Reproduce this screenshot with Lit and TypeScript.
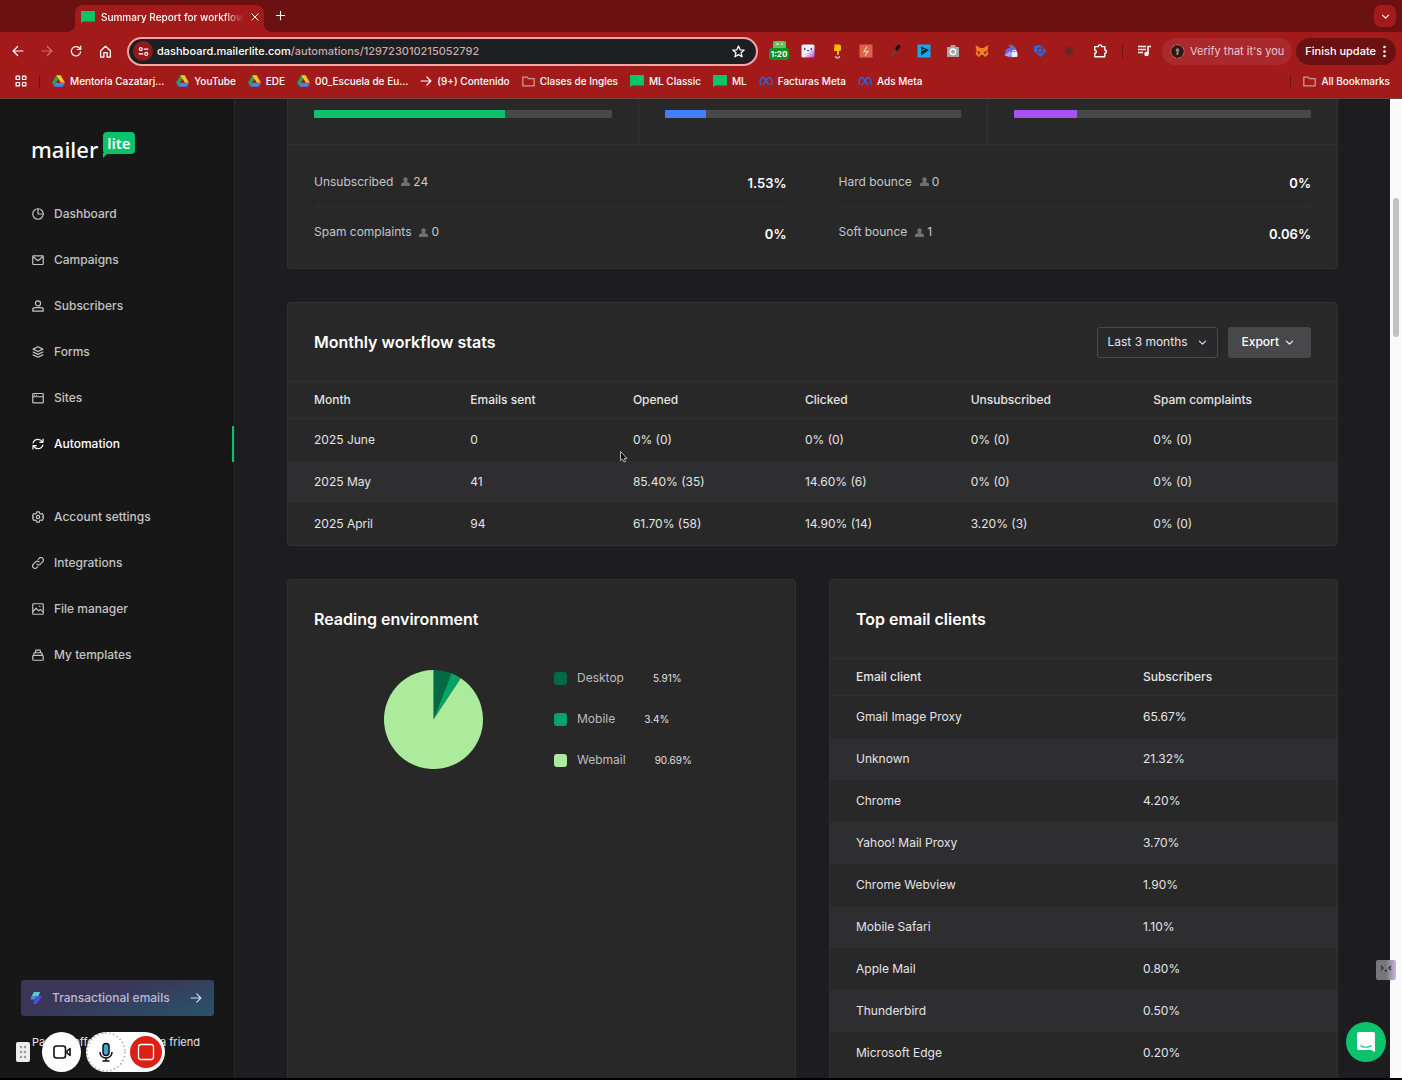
import { LitElement, html, css, svg, nothing } from "lit";
import { customElement } from "lit/decorators.js";
import { classMap } from "lit/directives/class-map.js";

const stroke = (body: unknown, size = 12, cls = "") => html`<svg class="ico ${cls}" width=${size} height=${size} viewBox="0 0 16 16" fill="none" stroke="currentColor" stroke-width="1.6" stroke-linecap="round" stroke-linejoin="round" aria-hidden="true">${body}</svg>`;

const glyph = {
  dashboard: svg`<circle cx="8" cy="8" r="7"/><path d="M8 1v7h7"/>`,
  mail: svg`<rect x="1" y="2.5" width="14" height="11.5" rx="1"/><path d="M2 4l6 5 6-5"/>`,
  person: svg`<circle cx="8" cy="4.5" r="3.4"/><path d="M1 14.8v-1.6c0-2 1.4-3 3-3h8c1.600 0 3 1 3 3v1.600z"/>`,
  layers: svg`<path d="M8 1L1.500 4.200 8 7.400l6.500-3.200z"/><path d="M1.500 8L8 11.200 14.500 8M1.500 11.800L8 15l6.500-3.200"/>`,
  sites: svg`<rect x="1" y="2" width="14" height="12.500" rx="1"/><path d="M1 6.300h14M3.500 4.200h.1M6 4.200h.1"/>`,
  sync: svg`<path d="M1.500 6.500C2.500 3.500 5 1.800 8 1.800c2.500 0 4.300 1.200 5.800 3.400M14.700 1.500v4.300h-4.300M14.500 9.500c-1 3-3.500 4.700-6.500 4.700-2.500 0-4.300-1.200-5.800-3.400M1.300 14.500v-4.300h4.300"/>`,
  gear: svg`<path d="M6.300 1.200h3.400l.6 2 1.400.8 2-.5 1.700 2.900-1.400 1.600 1.400 1.600-1.700 2.900-2-.5-1.400.8-.6 2H6.300l-.6-2-1.400-.8-2 .5L.6 9.600 2 8 .6 6.400l1.700-2.900 2 .5 1.400-.8z"/><circle cx="8" cy="8" r="2.200"/>`,
  link: svg`<path d="M6.600 9.400a3.200 3.200 0 0 0 4.600 0l3-3a3.200 3.200 0 0 0-4.600-4.600L8.300 3.100M9.400 6.600a3.200 3.200 0 0 0-4.600 0l-3 3a3.200 3.200 0 0 0 4.600 4.600l1.300-1.300"/>`,
  image: svg`<rect x="1" y="1" width="14" height="14" rx="1"/><path d="M1.500 11l4-4 3.500 3.500 2-2 3.500 3M10 4.500h.6"/>`,
  stack: svg`<rect x="1" y="8.500" width="14" height="6.500" rx="1.500"/><path d="M2 8.500l1-3.500h10l1 3.500M4.500 5l.6-3.500h5.800l.6 3.500"/>`,
  chevron: svg`<path d="M3.500 6L8 10.500 12.500 6"/>`,
  right: svg`<path d="M1.500 8h13M9 2.500L14.500 8 9 13.500"/>`,
  back: svg`<path d="M14.500 8h-13M7.500 2L1.500 8l6 6"/>`,
  forward: svg`<path d="M1.500 8h13M8.500 2l6 6-6 6"/>`,
  reload: svg`<path d="M13.500 5.500A6.200 6.200 0 1 0 14.200 9M14.300 1.500v4.500H9.800"/>`,
  home: svg`<path d="M2 7l6-5.500L14 7v7.800h-4V9.500H6v5.300H2z"/>`,
  close: svg`<path d="M3 3l10 10M13 3L3 13"/>`,
  plus: svg`<path d="M8 2v12M2 8h12"/>`,
  star: svg`<path d="M8 1.300l2 4.600 5 .4-3.800 3.300 1.200 4.900L8 11.900l-4.400 2.600 1.200-4.900L1 6.300l5-.4z"/>`,
  folder: svg`<path d="M1 13.500v-11h5l2 2h7v9z"/>`,
  grid: svg`<path d="M1.500 1.500h4.500v4.500H1.500zM10 1.500h4.500v4.500H10zM1.500 10h4.500v4.500H1.500zM10 10h4.500v4.500H10z"/>`,
  puzzle: svg`<path d="M2 3h4c0-2.600 4-2.600 4 0h3.500v4c2.400 0 2.400 3.500 0 3.500v4H2v-4c2.400 0 2.400-3.500 0-3.500z"/>`,
};

const drive = html`<svg class="ico" width="13" height="12" viewBox="0 0 18 16" aria-hidden="true"><path d="M6 0h6l-3 5.300L3.200 15.300 0 10.500z" fill="#20a35b"/><path d="M6 0h6l6 10.500h-6z" fill="#fcc21f"/><path d="M5.800 10.500H18L15 16H3z" fill="#4285f4"/><path d="M9 5.300l3 5.200H6z" fill="#a31a1a"/></svg>`;
const flag = html`<svg class="ico" width="14" height="12" viewBox="0 0 14 12" aria-hidden="true"><path d="M0 0h14v10.500H2.500L0 12z" fill="#06c668"/></svg>`;
const meta = html`<svg class="ico" width="14" height="12" viewBox="0 0 18 12" fill="none" stroke="#2f62d9" stroke-width="2" aria-hidden="true"><path d="M2 11C.5 5 3 1.500 5 1.500c3.500 0 5 9.500 8.500 9.500M16 11c1.500-6-1-9.500-3-9.500-3.500 0-5 9.500-8.500 9.500"/></svg>`;
const person = html`<svg class="ico person" width="9" height="9" viewBox="0 0 9 9" fill="currentColor" aria-hidden="true"><circle cx="4.500" cy="2.400" r="2.200"/><path d="M0 9V7.600C0 6 1.300 5.600 3 5.300V4h3v1.300c1.700.3 3 .7 3 2.300V9z"/></svg>`;

const bookmarks: [unknown, string][] = [
  [drive, "Mentoría Cazatarj..."],
  [drive, "YouTube"],
  [drive, "EDE"],
  [drive, "00_Escuela de Eu..."],
  [stroke(glyph.right, 12), "(9+) Contenido"],
  [stroke(glyph.folder, 13, "dim"), "Clases de Ingles"],
  [flag, "ML Classic"],
  [flag, "ML"],
  [meta, "Facturas Meta"],
  [meta, "Ads Meta"],
];

const extensions: [string, unknown][] = [
  ["Timer", svg`<rect x="4" y="0" width="13" height="9" rx="2" fill="#5fc35f"/><path d="M7 3h3M12 3h2" stroke="#fff"/><rect x="0" y="7" width="20" height="12" rx="3" fill="#129321"/><text x="10" y="16" text-anchor="middle" font-size="8" font-weight="700" fill="#fff">1:20</text>`],
  ["Notes", svg`<defs><linearGradient id="nt" x1="0" y1="0" x2="1" y2="1"><stop offset=".5" stop-color="#f3effb"/><stop offset="1" stop-color="#a646d8"/></linearGradient></defs><rect x="3.500" y="3.500" width="13" height="13" rx="1.500" fill="url(#nt)"/><path d="M6 7l1.500 1L6 9M9 9.500h2M14 7l-1.500 1L14 9" stroke="#443b59" fill="none"/>`],
  ["Pointer", svg`<path d="M7.500 3.500h5q1.500 0 1.500 2v3q0 1.500-1.500 1.500H12v3q0 1-1 1t-1-1v-3H7z" fill="#fbb90b"/><path d="M8.500 15c0 2.500 4 2.500 4 0" stroke="#c4a5df" stroke-width="1.500" fill="none"/>`],
  ["Flash", svg`<rect x="3.500" y="3.500" width="13" height="13" fill="#d8644b"/><path d="M11 5.500l-3 5h4l-3 4.500" stroke="#f5c1b2" stroke-width="1.300" fill="none"/>`],
  ["Colour picker", svg`<path d="M5 16l1-3 5-5 2 2-5 5z" fill="#6f3d35"/><path d="M10 7l3-3c2-1 3 1 2 2.500l-3 4z" fill="#16100f"/>`],
  ["Player", svg`<rect x="3.500" y="3.500" width="13" height="13" fill="#12a9ee"/><path d="M7 5.500l8 3.500-8 5.500z" fill="#0b2330"/><path d="M7 9.500l4-1" stroke="#12a9ee" fill="none"/>`],
  ["Screenshot", svg`<path d="M4 6h3l1-2h4l1 2h3v10H4z" fill="#a9a5a5"/><circle cx="10" cy="10.800" r="2.800" fill="none" stroke="#fff" stroke-width="1.300"/>`],
  ["Wallet", svg`<path d="M3.500 4l5 3h3l5-3-1 6 1 3-3 3-2-1h-3l-2 1-3-3 1-3z" fill="#f57b24"/><path d="M5 10l3 1-1 3zM15 10l-3 1 1 3zM8.500 14h3v1.500h-3z" fill="#5c2b25"/>`],
  ["Privacy", svg`<path d="M4 12c0-4 3-5 5-5 0-2-1-3-2-3 4-1 7 1 8 4 1.500 2 1 5 0 7-3 3-9 2-11-3z" fill="#6a65d9"/><path d="M3 14c3-1 5-3 6-4l2 3-3 3z" fill="#a8a4ee"/><rect x="10.500" y="11" width="6" height="5" rx="1" fill="#e8eefb"/><path d="M12 11V9.500h3V11" stroke="#e8eefb" fill="none"/>`],
  ["Tags", svg`<path d="M4 5l6-1 6.500 6-6 6L4 10z" fill="#2f68dc"/><circle cx="10" cy="9.500" r="2.500" fill="none" stroke="#8b2440" stroke-width="1.200"/>`],
  ["Recorder", svg`<circle cx="10" cy="10" r="4.500" fill="#772522"/><circle cx="10" cy="10" r="2" fill="#532829"/>`],
];

const primaryNav: [unknown, string][] = [
  [glyph.dashboard, "Dashboard"], [glyph.mail, "Campaigns"], [glyph.person, "Subscribers"],
  [glyph.layers, "Forms"], [glyph.sites, "Sites"], [glyph.sync, "Automation"],
];
const secondaryNav: [unknown, string][] = [
  [glyph.gear, "Account settings"], [glyph.link, "Integrations"], [glyph.image, "File manager"], [glyph.stack, "My templates"],
];

const rates = [
  { label: "Opened", value: 64, tone: "green" },
  { label: "Clicked", value: 14, tone: "blue" },
  { label: "Click to open", value: 21, tone: "purple" },
];
const totals = [
  ["Unsubscribed", "24", "1.53%"], ["Hard bounce", "0", "0%"],
  ["Spam complaints", "0", "0%"], ["Soft bounce", "1", "0.06%"],
];
const months = [
  ["2025 June", "0", "0% (0)", "0% (0)", "0% (0)", "0% (0)"],
  ["2025 May", "41", "85.40% (35)", "14.60% (6)", "0% (0)", "0% (0)"],
  ["2025 April", "94", "61.70% (58)", "14.90% (14)", "3.20% (3)", "0% (0)"],
];
const clients = [
  ["Gmail Image Proxy", "65.67%"], ["Unknown", "21.32%"], ["Chrome", "4.20%"],
  ["Yahoo! Mail Proxy", "3.70%"], ["Chrome Webview", "1.90%"], ["Mobile Safari", "1.10%"],
  ["Apple Mail", "0.80%"], ["Thunderbird", "0.50%"], ["Microsoft Edge", "0.20%"],
];
const environment = [
  { label: "Desktop", value: 5.91, color: "#036b43" },
  { label: "Mobile", value: 3.4, color: "#05a366" },
  { label: "Webmail", value: 90.69, color: "#aceb9b" },
];

function slices() {
  let from = 0;
  const at = (share: number) => {
    const a = (share / 100) * Math.PI * 2;
    return `${50 + 50 * Math.sin(a)} ${50 - 50 * Math.cos(a)}`;
  };
  return environment.map((e) => {
    const to = from + e.value;
    const d = `M50 50L${at(from)}A50 50 0 ${e.value > 50 ? 1 : 0} 1 ${at(to)}Z`;
    from = to;
    return svg`<path d=${d} fill=${e.color}/>`;
  });
}

@customElement("app-root")
export class AppRoot extends LitElement {
  static styles = css`
    :host { display: flex; flex-direction: column; box-sizing: border-box; height: 100vh; overflow: hidden; position: relative; border-bottom: 2px solid #000; background: #1d1d1f; color: #e4e4e6; font: 400 12px/18px Inter, "Liberation Sans", sans-serif; }
    *, *::before, *::after { box-sizing: border-box; }
    button, select, input { font: inherit; color: inherit; border: 0; background: none; padding: 0; margin: 0; }
    a { color: inherit; text-decoration: none; }
    h2 { margin: 0; font-size: 16px; line-height: 24px; font-weight: 600; color: #fff; }
    .ico { flex: none; display: block; }
    .dim { color: #c79a9a; }

    .tabs { flex: none; height: 32px; display: flex; align-items: flex-end; background: #6b1111; padding: 0 6px 0 75px; color: #fff; font-size: 10px; font-weight: 500; }
    .tab { position: relative; display: flex; align-items: center; gap: 6px; width: 189px; height: 27px; padding: 0 8px 4px 6px; background: #a31a1a; border-radius: 8px 8px 0 0; }
    .tab::before, .tab::after { content: ""; position: absolute; bottom: 0; width: 8px; height: 8px; }
    .tab::before { left: -8px; background: radial-gradient(circle at 0 0, transparent 8px, #a31a1a 8px); }
    .tab::after { right: -8px; background: radial-gradient(circle at 100% 0, transparent 8px, #a31a1a 8px); }
    .tab-title { flex: 1; white-space: nowrap; mask-image: linear-gradient(90deg, #000 86%, transparent 100%); }
    .new-tab { margin: 0 auto 11px 11px; }
    .tab-search { display: grid; place-items: center; width: 22px; height: 22px; margin-bottom: 5px; background: #a31a1a; border-radius: 7px; }

    .toolbar { flex: none; display: flex; align-items: center; height: 38px; padding: 0 6px 0 12px; background: #a31a1a; color: #fff; }
    .nav-buttons { display: flex; gap: 17px; margin-right: 15px; }
    .nav-buttons button:nth-child(2) { color: #d86d68; }
    .omnibox { flex: 1; display: flex; align-items: center; height: 29px; padding: 0 11px 0 4px; border: 2px solid #f2a6a0; border-radius: 15px; background: #1b1f21; font-size: 11px; font-weight: 500; }
    .site { display: grid; place-items: center; width: 20px; height: 20px; margin-right: 4px; border-radius: 50%; background: #8f1a1c; }
    .omnibox input { flex: 1; min-width: 0; color: #cda9ab; outline: none; }
    .extensions { display: flex; gap: 9px; margin: 0 14px 0 11px; }
    .extensions button, .extensions svg { display: block; width: 20px; height: 20px; }
    .puzzle { margin-right: 15px; }
    .rule { width: 1px; height: 13px; background: #6b1111; }
    .media { margin: 0 11px 0 15px; }
    .verify { display: flex; align-items: center; gap: 5px; height: 27px; padding: 0 8px; border-radius: 14px; background: #a9292c; color: #edc8d7; font-size: 11px; white-space: nowrap; }
    .update { display: flex; align-items: center; gap: 7px; height: 27px; margin-left: 4px; padding: 0 10px 0 9px; border-radius: 14px; background: #6b1111; font-size: 11px; font-weight: 500; white-space: nowrap; }

    .bookmarks { flex: none; display: flex; align-items: center; gap: 12px; height: 29px; padding: 0 12px 6px 15px; background: #a31a1a; border-bottom: 1px solid #704444; color: #fff; font-size: 10px; font-weight: 500; white-space: nowrap; }
    .bookmarks a { display: flex; align-items: center; gap: 5px; }
    .bookmarks .all { margin-left: auto; }

    .page { flex: 1; min-height: 0; display: flex; }
    .sidebar { flex: none; display: flex; flex-direction: column; width: 235px; border-right: 1px solid #29292b; background: #171717; }
    .logo { display: flex; align-items: flex-start; gap: 5px; margin: 33px 0 33px 31px; color: #fff; font: 500 22px/28px "Noto Sans", sans-serif; }
    .logo-word { padding-top: 3px; }
    .bubble { position: relative; height: 22px; padding: 0 4px; border-radius: 4px; background: #09c269; font-size: 15px; font-weight: 600; line-height: 22px; }
    .bubble::after { content: ""; position: absolute; left: 0; bottom: -4px; border-left: 5px solid #09c269; border-bottom: 5px solid transparent; }
    .menu { display: flex; flex-direction: column; gap: 10px; margin-bottom: 37px; }
    .menu a { display: flex; align-items: center; gap: 10px; height: 36px; padding-left: 32px; color: #c3c3c5; font-weight: 500; }
    .menu a.current { color: #fff; border-right: 2px solid #09c269; }
    .transactional { display: flex; align-items: center; gap: 10px; height: 36px; margin: auto 20px 17px 21px; padding: 0 12px 0 9px; border-radius: 3px; background: linear-gradient(165deg, #3b3558 35%, #28536a); color: #b9bbd0; font-weight: 500; }
    .transactional .ico:last-child { margin-left: auto; color: #d5d9e5; }
    .referrals { display: flex; justify-content: space-between; padding: 0 34px 27px 32px; font-size: 11px; }

    .main { flex: 1; min-width: 0; display: flex; flex-direction: column; gap: 33px; padding: 0 52px; overflow: hidden; background: #1d1d1f; }
    .card { flex: none; border: 1px solid #313133; border-radius: 4px; background: #282828; }
    .summary { border-top: 0; border-radius: 0 0 4px 4px; }
    .rates { display: grid; grid-template-columns: repeat(3, 1fr); border-bottom: 1px solid #303032; }
    .rate { padding: 11px 26px 26px; }
    .rate + .rate { border-left: 1px solid #323234; }
    .track { height: 8px; border-radius: 1px; background: #48484a; overflow: hidden; }
    .fill { height: 100%; }
    .green { background: #0fc16b; }
    .blue { background: #3d81f4; }
    .purple { background: #a653f5; }
    .totals { display: grid; grid-template-columns: 1fr 1fr; column-gap: 52px; padding: 12px 26px 11px; }
    .total { display: flex; align-items: center; gap: 8px; height: 50px; color: #c6c6c8; }
    .total:nth-child(-n + 2) { border-bottom: 1px solid #303032; }
    .people { display: flex; align-items: center; gap: 3px; }
    .person { color: #707072; }
    .total strong { margin-left: auto; padding-top: 3px; font-size: 13px; font-weight: 600; color: #fff; }

    .card-head { display: flex; align-items: center; gap: 10px; height: 78px; padding: 0 26px; }
    .card-head h2 { margin-right: auto; }
    .period { display: grid; align-items: center; height: 31px; border: 1px solid #4a4a4d; border-radius: 3px; background: #29292b; }
    .period > * { grid-area: 1 / 1; }
    .period select { appearance: none; height: 29px; padding: 0 29px 0 9px; }
    .period .ico { justify-self: end; margin-right: 9px; pointer-events: none; }
    .export { display: flex; align-items: center; gap: 5px; height: 31px; padding: 0 16px 0 13px; border-radius: 3px; background: #48484a; color: #fff; font-weight: 500; }

    table { width: 100%; border-collapse: collapse; table-layout: fixed; }
    th, td { padding: 12px 0 12px 26px; text-align: left; }
    th { padding-top: 9px; padding-bottom: 9px; border-top: 1px solid #303032; border-bottom: 1px solid #303032; font-weight: 500; }
    tbody tr:nth-child(even) { background: #2e2e30; }
    .c1 { width: 14.9%; } .c2 { width: 15.5%; } .c3 { width: 16.4%; } .c4 { width: 15.8%; } .c5 { width: 17.4%; }
    .client { width: 56.6%; }

    .split { flex: none; display: grid; grid-template-columns: 1fr 1fr; gap: 33px; }
    .clients { padding-bottom: 26px; }
    .reading { display: flex; align-items: center; padding: 11px 26px 0 96px; }
    .pie { flex: none; width: 99px; height: 99px; }
    .legend { display: flex; flex-direction: column; gap: 23px; margin: 0 0 0 71px; padding: 0; list-style: none; }
    .legend li { display: flex; align-items: center; gap: 10px; color: #bcbcbe; }
    .swatch { width: 13px; height: 13px; border-radius: 3px; }
    .share { margin-left: 19px; font-size: 10px; color: #e0e0e2; }

    .scrollbar { flex: none; width: 12px; padding: 99px 3px 0; background: #fafafa; }
    .thumb { height: 139px; border-radius: 3px; background: #c1c1c1; }

    .recorder { position: absolute; left: 16px; bottom: 6px; display: flex; align-items: center; }
    .grip { display: grid; place-items: center; width: 14px; height: 20px; margin-right: 12px; border-radius: 2px; background: #eee; }
    .camera { display: grid; place-items: center; width: 39px; height: 40px; margin-right: 5px; border-radius: 50%; background: #fff; color: #111; }
    .pill { display: flex; align-items: center; width: 79px; height: 40px; border-radius: 20px; background: #fff; }
    .pill button, .camera { line-height: 0; }
    .chat { position: absolute; right: 16px; bottom: 16px; display: grid; place-items: center; width: 40px; height: 40px; border-radius: 50%; background: #0cc26c; }
    .helper { position: absolute; right: 6px; bottom: 98px; line-height: 0; }
    .pointer { position: absolute; left: 620px; top: 451px; }
  `;

  private menu(items: [unknown, string][], label: string) {
    return html`<nav class="menu" aria-label=${label}>${items.map(([g, text]) => html`<a href="#" class=${classMap({ current: text === "Automation" })} aria-current=${text === "Automation" ? "page" : nothing}>${stroke(g)}${text}</a>`)}</nav>`;
  }

  private rows(data: string[][]) {
    return html`<tbody>${data.map((r) => html`<tr>${r.map((c) => html`<td>${c}</td>`)}</tr>`)}</tbody>`;
  }

  render() {
    return html`
      <div class="tabs">
        <div class="tab">${flag}<span class="tab-title">Summary Report for workflow</span><button aria-label="Close tab">${stroke(glyph.close, 10)}</button></div>
        <button class="new-tab" aria-label="New tab">${stroke(glyph.plus, 11)}</button>
        <button class="tab-search" aria-label="Search tabs">${stroke(glyph.chevron, 11)}</button>
      </div>
      <div class="toolbar">
        <div class="nav-buttons">
          <button aria-label="Back">${stroke(glyph.back)}</button>
          <button aria-label="Forward">${stroke(glyph.forward)}</button>
          <button aria-label="Reload">${stroke(glyph.reload)}</button>
          <button aria-label="Home">${stroke(glyph.home, 13)}</button>
        </div>
        <div class="omnibox">
          <button class="site" aria-label="Site information">${stroke(svg`<circle cx="4" cy="4.500" r="2.200"/><path d="M9 4.500h5.500M1.500 11.500H7"/><circle cx="12" cy="11.500" r="2.200"/>`, 11)}</button>
          <label for="path">dashboard.mailerlite.com</label><input id="path" value="/automations/129723010215052792">
          <button aria-label="Bookmark this page">${stroke(glyph.star, 13)}</button>
        </div>
        <div class="extensions">${extensions.map(([name, art]) => html`<button aria-label=${name}><svg viewBox="0 0 20 20">${art}</svg></button>`)}</div>
        <button class="puzzle" aria-label="Extensions">${stroke(glyph.puzzle, 14)}</button>
        <span class="rule"></span>
        <button class="media" aria-label="Media controls"><svg class="ico" width="13" height="12" viewBox="0 0 13 12" fill="none" stroke="#fff" stroke-width="1.500"><path d="M0 1.500h8M0 4.500h8M0 7.500h5M10 9V1.500h3"/><circle cx="8.500" cy="9" r="1.500" fill="#fff"/></svg></button>
        <button class="verify"><svg class="ico" width="15" height="15" viewBox="0 0 15 15"><circle cx="7.500" cy="7.500" r="6.700" fill="#241b1c" stroke="#e0605c" stroke-dasharray="5 1"/><circle cx="7.500" cy="6" r="1.800" fill="#a87c6b"/><path d="M6.500 7h2v4h-2z" fill="#a87c6b"/></svg>Verify that it's you</button>
        <button class="update">Finish update<svg class="ico" width="3" height="13" viewBox="0 0 3 13" fill="#fff"><circle cx="1.500" cy="2" r="1.300"/><circle cx="1.500" cy="6.500" r="1.300"/><circle cx="1.500" cy="11" r="1.300"/></svg></button>
      </div>
      <div class="bookmarks">
        <button aria-label="Apps">${stroke(glyph.grid)}</button><span class="rule"></span>
        ${bookmarks.map(([icon, text]) => html`<a href="#">${icon}${text}</a>`)}
        <span class="rule all"></span><a href="#">${stroke(glyph.folder, 13, "dim")}All Bookmarks</a>
      </div>

      <div class="page">
        <aside class="sidebar">
          <a class="logo" href="#"><span class="logo-word">mailer</span><span class="bubble">lite</span></a>
          ${this.menu(primaryNav, "Main")}
          ${this.menu(secondaryNav, "Account")}
          <a class="transactional" href="#"><svg class="ico" width="12" height="12" viewBox="0 0 12 12"><path d="M4 0h6L8.500 4.500h-7z" fill="#5cc8d8"/><path d="M1.500 4.500H11L8.500 7.500H.5z" fill="#3a9ce0"/><path d="M5.500 4.500H12L6.500 12H3l1.500-4.500z" fill="#4b4be0"/></svg>Transactional emails${stroke(glyph.right)}</a>
          <div class="referrals"><a href="#">Partner offers</a><a href="#">Refer a friend</a></div>
        </aside>

        <main class="main">
          <section class="card summary">
            <div class="rates">${rates.map((r) => html`<div class="rate"><div class="track" role="img" aria-label=${r.label}><div class="fill ${r.tone}" style="width:${r.value}%"></div></div></div>`)}</div>
            <div class="totals">${totals.map(([name, count, share]) => html`<div class="total"><span>${name}</span><span class="people">${person}${count}</span><strong>${share}</strong></div>`)}</div>
          </section>

          <section class="card">
            <div class="card-head">
              <h2>Monthly workflow stats</h2>
              <div class="period"><select aria-label="Period"><option>Last 3 months</option></select>${stroke(glyph.chevron, 11)}</div>
              <button class="export">Export${stroke(glyph.chevron, 11)}</button>
            </div>
            <table>
              <thead><tr><th class="c1">Month</th><th class="c2">Emails sent</th><th class="c3">Opened</th><th class="c4">Clicked</th><th class="c5">Unsubscribed</th><th>Spam complaints</th></tr></thead>
              ${this.rows(months)}
            </table>
          </section>

          <div class="split">
            <section class="card">
              <div class="card-head"><h2>Reading environment</h2></div>
              <div class="reading">
                <svg class="pie" viewBox="0 0 100 100" role="img" aria-label="Reading environment">${slices()}</svg>
                <ul class="legend">${environment.map((e) => html`<li><span class="swatch" style="background:${e.color}"></span>${e.label}<span class="share">${e.value}%</span></li>`)}</ul>
              </div>
            </section>
            <section class="card clients">
              <div class="card-head"><h2>Top email clients</h2></div>
              <table>
                <thead><tr><th class="client">Email client</th><th>Subscribers</th></tr></thead>
                ${this.rows(clients)}
              </table>
            </section>
          </div>
        </main>
        <div class="scrollbar"><div class="thumb"></div></div>
      </div>

      <div class="recorder">
        <span class="grip"><svg class="ico" width="8" height="14" viewBox="0 0 8 14" fill="#999"><circle cx="2" cy="2" r="1.200"/><circle cx="6" cy="2" r="1.200"/><circle cx="2" cy="7" r="1.200"/><circle cx="6" cy="7" r="1.200"/><circle cx="2" cy="12" r="1.200"/><circle cx="6" cy="12" r="1.200"/></svg></span>
        <button class="camera" aria-label="Camera"><svg class="ico" width="18" height="14" viewBox="0 0 18 14" fill="none" stroke="currentColor" stroke-width="1.600" stroke-linejoin="round"><rect x="1" y="1" width="11.500" height="12" rx="2.500"/><path d="M14 6l3-2.500v7L14 8z"/></svg></button>
        <div class="pill">
          <button aria-label="Microphone"><svg class="ico" width="40" height="40" viewBox="0 0 40 40" fill="none"><circle cx="20" cy="20" r="19" stroke="#aaa" stroke-width="1.500" stroke-dasharray="1.500 2.500"/><rect x="17" y="11.500" width="6" height="12" rx="3" fill="#4ba0d2" stroke="#111" stroke-width="1.500"/><path d="M14 20c0 8 12 8 12 0M20 26v3M16.500 29h7" stroke="#111" stroke-width="1.600"/></svg></button>
          <button aria-label="Stop recording"><svg class="ico" width="39" height="40" viewBox="0 0 39 40"><circle cx="20" cy="20" r="16" fill="#db2015"/><rect x="12.500" y="12.500" width="15" height="15" rx="2.500" fill="none" stroke="#fff" stroke-width="1.300"/></svg></button>
        </div>
      </div>
      <button class="helper" aria-label="Assistant"><svg class="ico" width="20" height="20" viewBox="0 0 20 20"><defs><linearGradient id="hp"><stop offset=".5" stop-color="#77777b"/><stop offset="1" stop-color="#cdb5e2"/></linearGradient></defs><rect width="20" height="20" rx="2" fill="url(#hp)"/><path d="M5 6l2 2-2 2M9 10l1 1 1-1M15 6l-2 2 2 2" fill="none" stroke="#2b2b33" stroke-width="1.300"/></svg></button>
      <button class="chat" aria-label="Open chat"><svg class="ico" width="20" height="20" viewBox="0 0 20 20"><path d="M3 0h14q2 0 2 2v18l-4-2H3q-2 0-2-2V2q0-2 2-2z" fill="#fff"/><path d="M4.500 13.500q5.500 3.500 11 0" fill="none" stroke="#0cc26c" stroke-width="1.200"/></svg></button>
      <svg class="pointer" width="8" height="12" viewBox="0 0 8 12" aria-hidden="true"><path d="M.5.5v9l2-1.500 1.500 3 1.500-.8L4.300 7.500H7z" fill="#080808" stroke="#ddd" stroke-width=".8"/></svg>
    `;
  }
}
